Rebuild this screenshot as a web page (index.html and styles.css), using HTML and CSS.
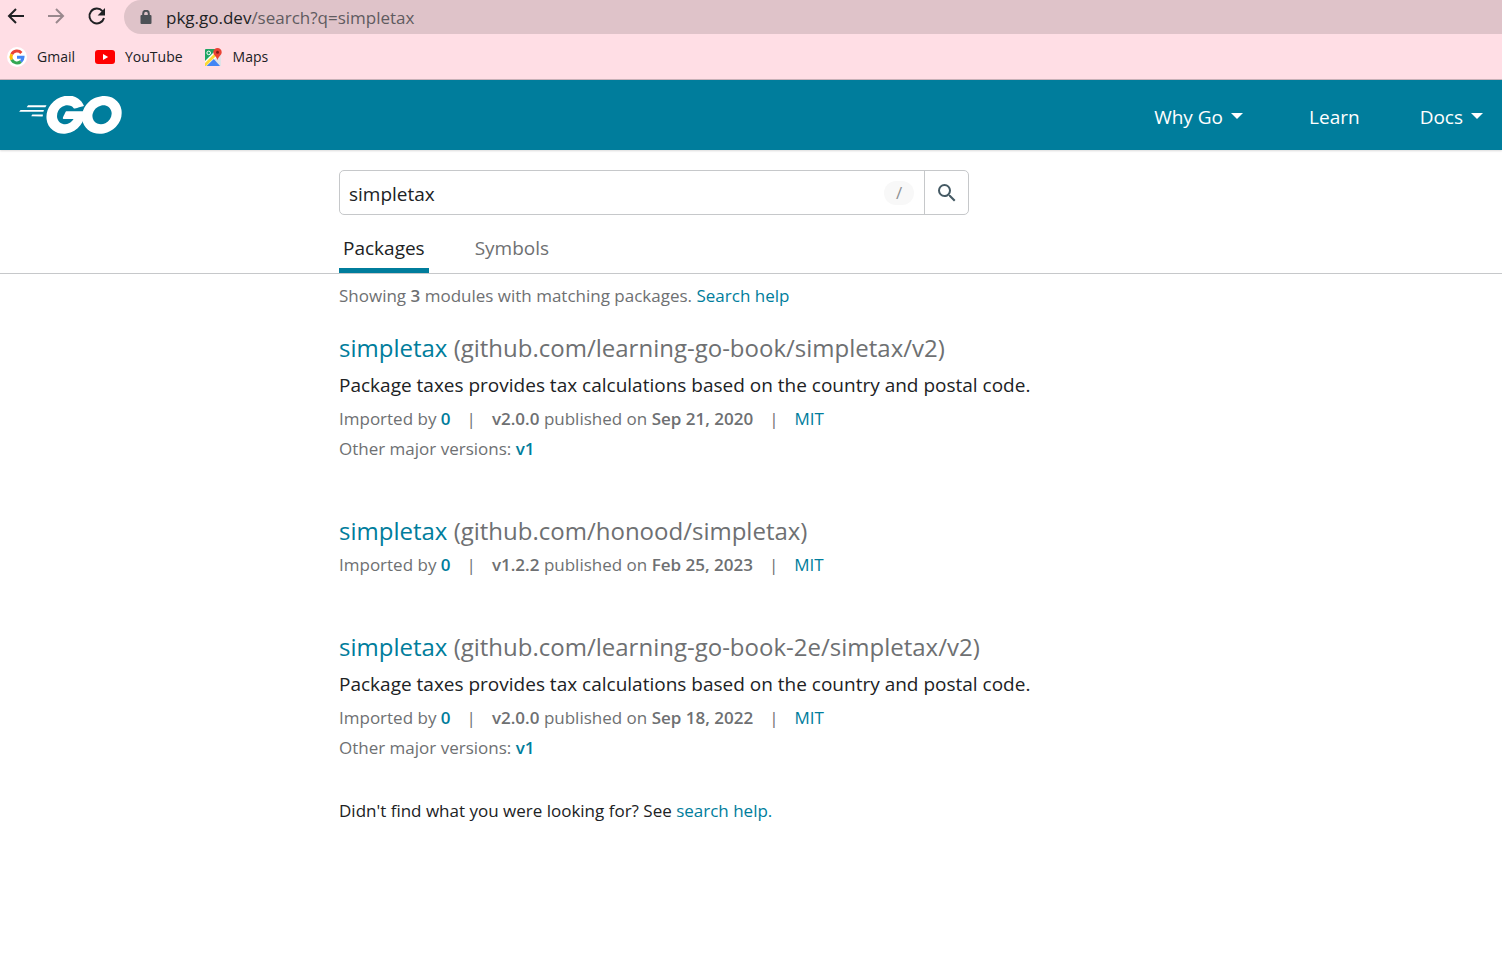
FILE: index.html
```html
<!DOCTYPE html>
<html lang="en">
<head>
<meta charset="utf-8">
<title>simpletax - Search Results - Go Packages</title>
<link rel="stylesheet" href="styles.css">
</head>
<body>
<div class="browser">
  <div class="toolbar">
    <button class="tool" aria-label="Back"><svg viewBox="0 0 20 20"><path d="M18 10H3M10 3L3 10l7 7"/></svg></button>
    <button class="tool tool-off" aria-label="Forward"><svg viewBox="0 0 20 20"><path d="M2 10h15M10 3l7 7-7 7"/></svg></button>
    <button class="tool" aria-label="Reload"><svg viewBox="0 0 20 20"><path d="M16.500 5.200A7.400 7.400 0 1 0 18 12"/><path class="solid" d="M19 2v7.400h-7.400z"/></svg></button>
    <div class="address">
      <svg class="lock" viewBox="0 0 12 14"><path d="M1.5 5h9A1 1 0 0 1 11.500 6v7a1 1 0 0 1-1 1h-9a1 1 0 0 1-1-1V6a1 1 0 0 1 1-1z"/><path class="shackle" d="M3.200 6V3.500a2.800 2.800 0 0 1 5.600 0V6"/></svg>
      <span>pkg.go.dev<span class="path">/search?q=simpletax</span></span>
    </div>
  </div>
  <nav class="bookmarks" aria-label="Bookmarks">
    <a href="#"><svg viewBox="0 0 20 20"><circle cx="10" cy="10" r="10" fill="#fff"/><g fill="none" stroke-width="3"><path stroke="#ea4335" d="M4.700 7.200A6 6 0 0 1 14.400 5.900"/><path stroke="#fbbc05" d="M4.700 7.200a6 6 0 0 0 0 5.600"/><path stroke="#34a853" d="M4.700 12.800a6 6 0 0 0 9.200 1.700"/><path stroke="#4285f4" d="M10 10.200h6a6 6 0 0 1-2.100 4.300"/></g></svg>Gmail</a>
    <a href="#"><svg viewBox="0 0 20 20"><rect y="3" width="20" height="14" rx="3" fill="#f00"/><path d="M8 7v6l5.200-3z" fill="#fff"/></svg>YouTube</a>
    <a href="#"><svg viewBox="0 0 20 20"><path fill="#dfe3e8" d="M3 2h13a2 2 0 0 1 2 2v15H2V3a1 1 0 0 1 1-1z"/><path fill="#1fa463" d="M3 2h11v3L2 17V3a1 1 0 0 1 1-1z"/><path fill="#fff" d="M2 14L13 3l2 6L5 19H2z"/><path fill="#fdd835" d="M2 16L12.500 5.500v4L3 19H2z"/><path fill="#4285f4" d="M3.500 19l7.300-7L17 19z"/><circle cx="5.700" cy="5.900" r="1.800" fill="none" stroke="#fff"/><path fill="#ea4335" d="M14.500 1a4.200 4.200 0 0 1 4.200 4.200c0 3-3.300 3.800-4.200 8-.900-4.200-4.200-5-4.200-8A4.200 4.200 0 0 1 14.500 1z"/><circle cx="14.500" cy="5.200" r="1.500" fill="#801f18"/></svg>Maps</a>
  </nav>
</div>
<header class="header">
  <a href="#" aria-label="Go home"><svg class="logo" viewBox="24.7 78.7 205.500 76.200"><path d="M40.2,101.1c-0.4,0-0.5-0.2-0.3-0.5l2.1-2.7c0.2-0.3,0.7-0.5,1.1-0.5l35.7,0c0.4,0,0.5,0.3,0.3,0.6l-1.7,2.6c-0.2,0.3-0.7,0.6-1,0.6L40.2,101.1z"/><path d="M25.1,110.3c-0.4,0-0.5-0.2-0.3-0.5l2.1-2.7c0.2-0.3,0.7-0.5,1.1-0.5l45.6,0c0.4,0,0.6,0.3,0.5,0.6l-0.8,2.4c-0.1,0.4-0.5,0.6-0.9,0.6L25.1,110.3z"/><path d="M49.3,119.5c-0.4,0-0.5-0.3-0.3-0.6l1.4-2.5c0.2-0.3,0.6-0.6,1-0.6l20,0c0.4,0,0.7,0.3,0.7,0.7l-0.2,2.4c0,0.4-0.4,0.7-0.7,0.7L49.3,119.5z"/><path d="M153.1,99.3c-6.3,1.6-10.6,2.8-16.8,4.4c-1.5,0.4-1.6,0.5-2.9-1c-1.5-1.7-2.6-2.8-4.7-3.8c-6.3-3.1-12.4-2.2-18.1,1.5c-6.8,4.4-10.3,10.9-10.2,19c0.1,8,5.6,14.6,13.5,15.7c6.8,0.9,12.5-1.5,17-6.6c0.9-1.1,1.7-2.3,2.7-3.7c-3.6,0-8.1,0-19.3,0c-2.1,0-2.6-1.3-1.9-3c1.3-3.1,3.7-8.3,5.1-10.9c0.3-0.6,1-1.6,2.5-1.6c5.1,0,23.9,0,36.4,0c-0.2,2.7-0.2,5.4-0.6,8.1c-1.1,7.2-3.8,13.8-8.2,19.6c-7.2,9.5-16.6,15.4-28.5,17c-9.8,1.3-18.9-0.6-26.9-6.6c-7.4-5.6-11.6-13-12.7-22.2c-1.3-10.9,1.9-20.7,8.5-29.3c7.1-9.3,16.5-15.2,28-17.3c9.4-1.7,18.4-0.6,26.5,4.9c5.3,3.5,9.1,8.3,11.6,14.1C154.7,98.5,154.3,99,153.1,99.3z"/><path d="M186.2,154.6c-9.1-0.2-17.4-2.8-24.4-8.8c-5.9-5.1-9.6-11.6-10.8-19.3c-1.8-11.3,1.3-21.3,8.1-30.2c7.3-9.6,16.1-14.6,28-16.7c10.2-1.8,19.8-0.8,28.5,5.1c7.9,5.4,12.8,12.7,14.1,22.3c1.7,13.5-2.2,24.5-11.5,33.9c-6.6,6.7-14.7,10.9-24,12.8C191.5,154.2,188.8,154.3,186.2,154.6z M210,114.2c-0.1-1.3-0.1-2.3-0.3-3.3c-1.8-9.9-10.9-15.5-20.4-13.3c-9.3,2.1-15.3,8-17.5,17.4c-1.8,7.8,2,15.7,9.2,18.9c5.5,2.4,11,2.1,16.3-0.6C205.2,129.2,209.5,122.9,210,114.2z"/></svg></a>
  <nav class="menu">
    <a class="dropdown" href="#">Why Go<span class="caret"></span></a>
    <a href="#">Learn</a>
    <a href="#">Docs<span class="caret"></span></a>
  </nav>
</header>
<div class="search-area">
  <div class="content">
    <form class="search" role="search">
      <input class="search-input" type="text" value="simpletax" aria-label="Search for a package">
      <span class="key">/</span>
      <button class="search-button" type="button" aria-label="Submit search"><svg viewBox="0 0 24 24"><path d="M15.5 14h-.79l-.28-.27A6.471 6.471 0 0 0 16 9.500 6.500 6.500 0 1 0 9.500 16c1.610 0 3.090-.590 4.230-1.570l.270.280v.790l5 4.990L20.490 19l-4.990-5zm-6 0C7.010 14 5 11.990 5 9.500S7.010 5 9.500 5 14 7.010 14 9.500 11.990 14 9.500 14z"/></svg></button>
    </form>
    <nav class="tabs">
      <a class="tab tab-active" href="#">Packages</a>
      <a class="tab" href="#">Symbols</a>
    </nav>
  </div>
</div>
<main class="content">
  <p class="meta summary">Showing <strong>3</strong> modules with matching packages. <a href="#">Search help</a></p>
  <article class="result">
    <h2><a href="#">simpletax</a> (github.com/learning-go-book/simpletax/v2)</h2>
    <p class="synopsis">Package taxes provides tax calculations based on the country and postal code.</p>
    <div class="meta facts"><span>Imported by <a href="#"><strong>0</strong></a></span><span>|</span><span><strong>v2.0.0</strong> published on <strong>Sep 21, 2020</strong></span><span>|</span><a href="#">MIT</a></div>
    <p class="meta">Other major versions: <a href="#"><strong>v1</strong></a></p>
  </article>
  <article class="result">
    <h2><a href="#">simpletax</a> (github.com/honood/simpletax)</h2>
    <div class="meta facts"><span>Imported by <a href="#"><strong>0</strong></a></span><span>|</span><span><strong>v1.2.2</strong> published on <strong>Feb 25, 2023</strong></span><span>|</span><a href="#">MIT</a></div>
  </article>
  <article class="result">
    <h2><a href="#">simpletax</a> (github.com/learning-go-book-2e/simpletax/v2)</h2>
    <p class="synopsis">Package taxes provides tax calculations based on the country and postal code.</p>
    <div class="meta facts"><span>Imported by <a href="#"><strong>0</strong></a></span><span>|</span><span><strong>v2.0.0</strong> published on <strong>Sep 18, 2022</strong></span><span>|</span><a href="#">MIT</a></div>
    <p class="meta">Other major versions: <a href="#"><strong>v1</strong></a></p>
  </article>
  <p class="meta footer">Didn't find what you were looking for? See <a href="#">search help.</a></p>
</main>
</body>
</html>
```
FILE: styles.css
```css
* { box-sizing: border-box; }
body {
  margin: 0;
  background: #fff;
  color: #202224;
  font-family: "Segoe UI", "Open Sans", "Noto Sans", sans-serif;
  font-size: 17px;
}
p, h2 { margin: 0; }
a { color: #007d9c; text-decoration: none; }
strong { font-weight: 600; }
button { border: 0; padding: 0; background: none; }

.browser { border-bottom: 1px solid #c9b3b9; background: #ffdee5; }
.toolbar { display: flex; align-items: center; height: 34px; padding-left: 6px; }
.tool { width: 20px; height: 20px; margin: 0 20px 2px 0; }
.tool svg { display: block; fill: none; stroke: #202124; stroke-width: 2; }
.tool .solid { fill: #202124; stroke: none; }
.tool-off { opacity: .45; }
.address {
  display: flex;
  flex: 1;
  align-items: center;
  gap: 14px;
  height: 34px;
  margin-left: -2px;
  padding-left: 16px;
  border-radius: 17px 0 0 17px;
  background: #dfc3c9;
}
.lock { width: 12px; height: 14px; fill: #4d5156; }
.shackle { fill: none; stroke: #4d5156; stroke-width: 2; }
.path { color: #5f5b60; }
.bookmarks {
  display: flex;
  align-items: center;
  gap: 20px;
  height: 45px;
  padding-left: 7px;
  font-size: 14px;
}
.bookmarks a { display: flex; align-items: center; gap: 10px; color: #202124; }
.bookmarks svg { width: 20px; height: 20px; }

.header {
  display: flex;
  align-items: center;
  justify-content: space-between;
  height: 70px;
  padding: 0 19px;
  background: #007d9c;
  box-shadow: 0 1px 2px rgba(0, 0, 0, .15);
}
.logo { display: block; width: 103px; height: 38px; fill: #fff; }
.menu { display: flex; gap: 60px; padding-top: 4px; font-size: 19px; }
.menu a { display: flex; align-items: center; gap: 8px; color: #fff; }
.menu .dropdown { padding-right: 6px; }
.caret { margin-top: -2px; border: 6px solid transparent; border-top-color: #fff; border-bottom: 0; }

.content { max-width: 824px; margin: 0 auto; }
.search-area { padding-top: 20px; border-bottom: 1px solid #c6c8ca; }
.search {
  display: flex;
  align-items: center;
  max-width: 630px;
  height: 45px;
  border: 1px solid #c6c8ca;
  border-radius: 5px;
}
.search-input {
  flex: 1;
  min-width: 0;
  height: 43px;
  padding: 3px 9px 0;
  border: 0;
  outline: 0;
  background: none;
  color: #202224;
  font: inherit;
  font-size: 19px;
}
.key {
  width: 30px;
  height: 24px;
  margin-right: 10px;
  border-radius: 12px;
  background: #f8f8f8;
  color: #8e9093;
  font-size: 17px;
  line-height: 24px;
  text-align: center;
}
.search-button {
  display: grid;
  place-items: center;
  width: 44px;
  height: 43px;
  border-left: 1px solid #c6c8ca;
}
.search-button svg { width: 24px; height: 24px; fill: #455a64; }
.tabs { display: flex; gap: 42px; padding-top: 17px; font-size: 19px; }
.tab { padding: 0 4px 4px; border-bottom: 5px solid transparent; color: #6e7072; line-height: 32px; }
.tab-active { border-color: #007d9c; color: #202224; }

.meta { color: #6e7072; font-size: 17px; line-height: 30px; }
.summary { padding-top: 7px; }
.result { padding-top: 19px; margin-bottom: 30px; }
h2 { padding-bottom: 1px; color: #6e7072; font-size: 24px; font-weight: 400; line-height: 36px; }
.synopsis { font-size: 19px; line-height: 37px; }
.facts { display: flex; gap: 16px; }
.meta.footer { padding-top: 3px; color: #202224; }
```
